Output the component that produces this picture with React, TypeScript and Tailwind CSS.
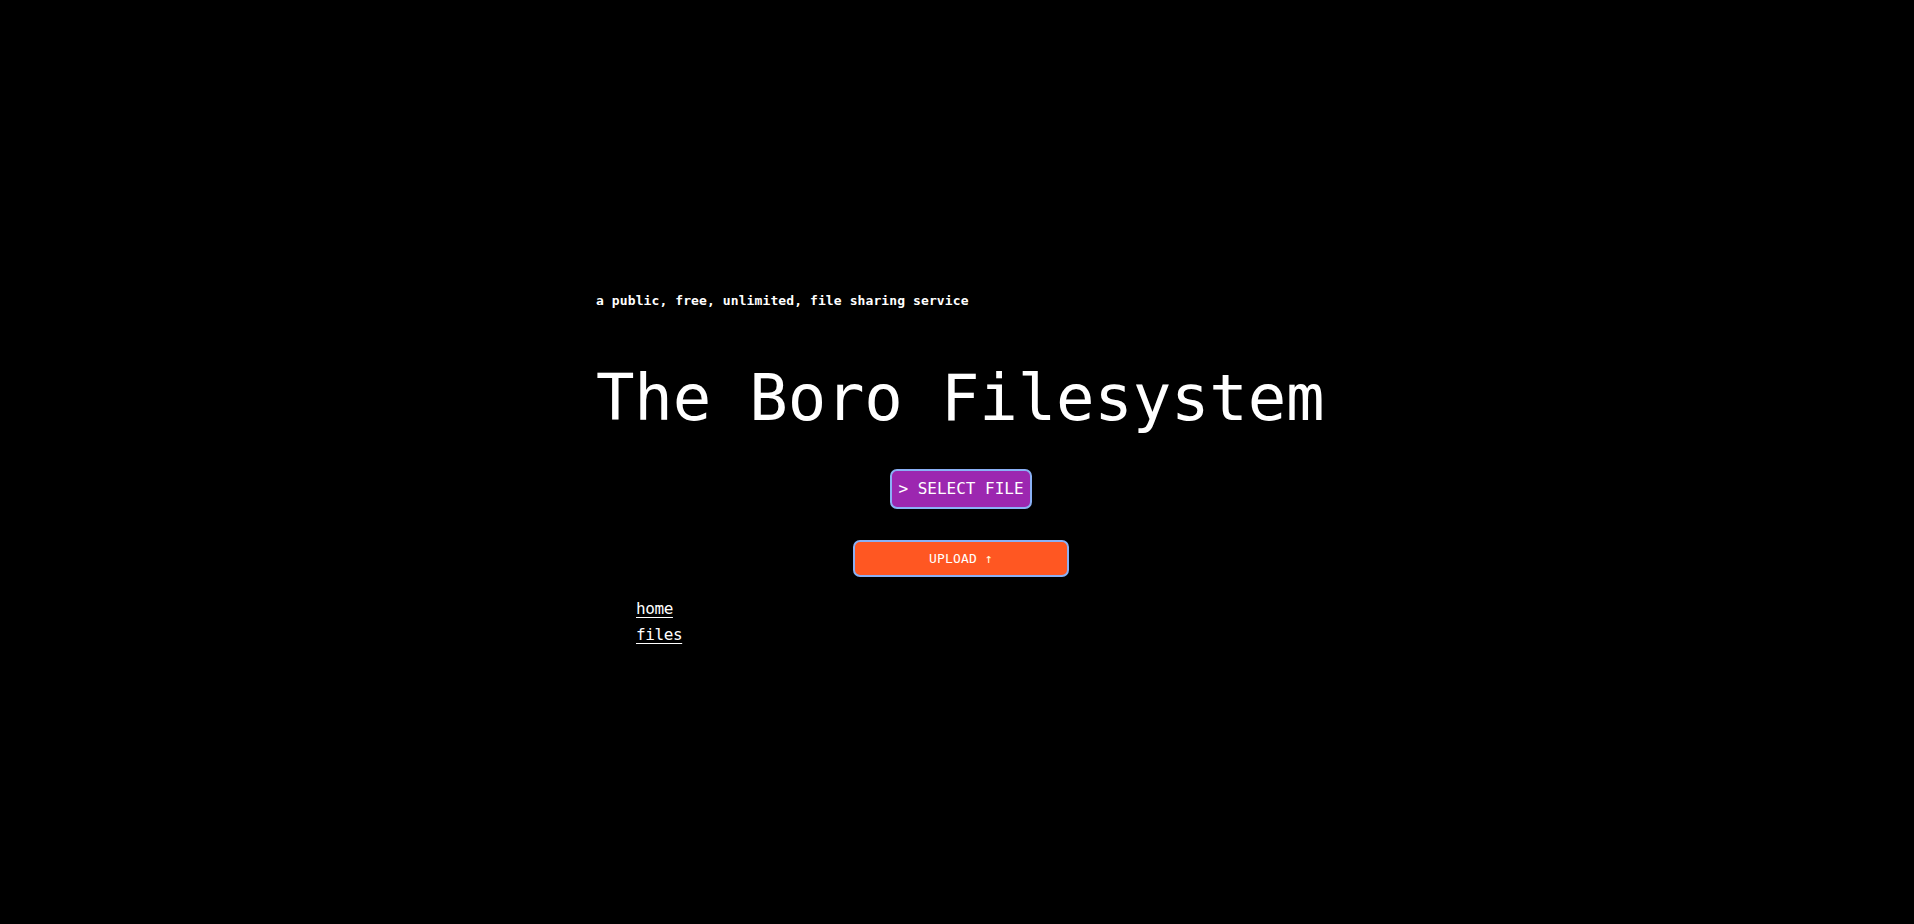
import React from 'react';

const mono = { fontFamily: '"DejaVu Sans Mono", "Liberation Mono", monospace' };

export default function App() {
  return (
    <div className="min-h-screen bg-black text-white flex items-center justify-center" style={mono}>
      <div className="w-[728px] ml-[6px] pt-[15px]">
        <p className="text-[13px] font-bold leading-[20px] tracking-[0.1px] whitespace-nowrap">
          a public, free, unlimited, file sharing service
        </p>

        <h1 className="mt-[55px] text-[64px] leading-[64px] font-normal tracking-[-0.2px] whitespace-nowrap">
          The Boro Filesystem
        </h1>

        <div className="mt-[39px] flex flex-col items-center pl-[2px]">
          <button className="h-[40px] px-[6px] rounded-[7px] border-2 border-[#8ab0f5] bg-[#9c27b0] text-[16px] text-white">
            &gt; SELECT FILE
          </button>
          <button className="mt-[31px] h-[37px] w-[216px] rounded-[7px] border-2 border-[#8ab0f5] bg-[#ff5722] text-[13px] tracking-[0.2px] text-white">
            UPLOAD <span className="text-[#fff6d6]">↑</span>
          </button>
        </div>

        <ul className="mt-[19px] pl-10 list-none text-[16px] leading-[26px] tracking-[-0.4px]">
          <li>
            <a href="#" className="underline underline-offset-[3px]">home</a>
          </li>
          <li>
            <a href="#" className="underline underline-offset-[3px]">files</a>
          </li>
        </ul>
      </div>
    </div>
  );
}
